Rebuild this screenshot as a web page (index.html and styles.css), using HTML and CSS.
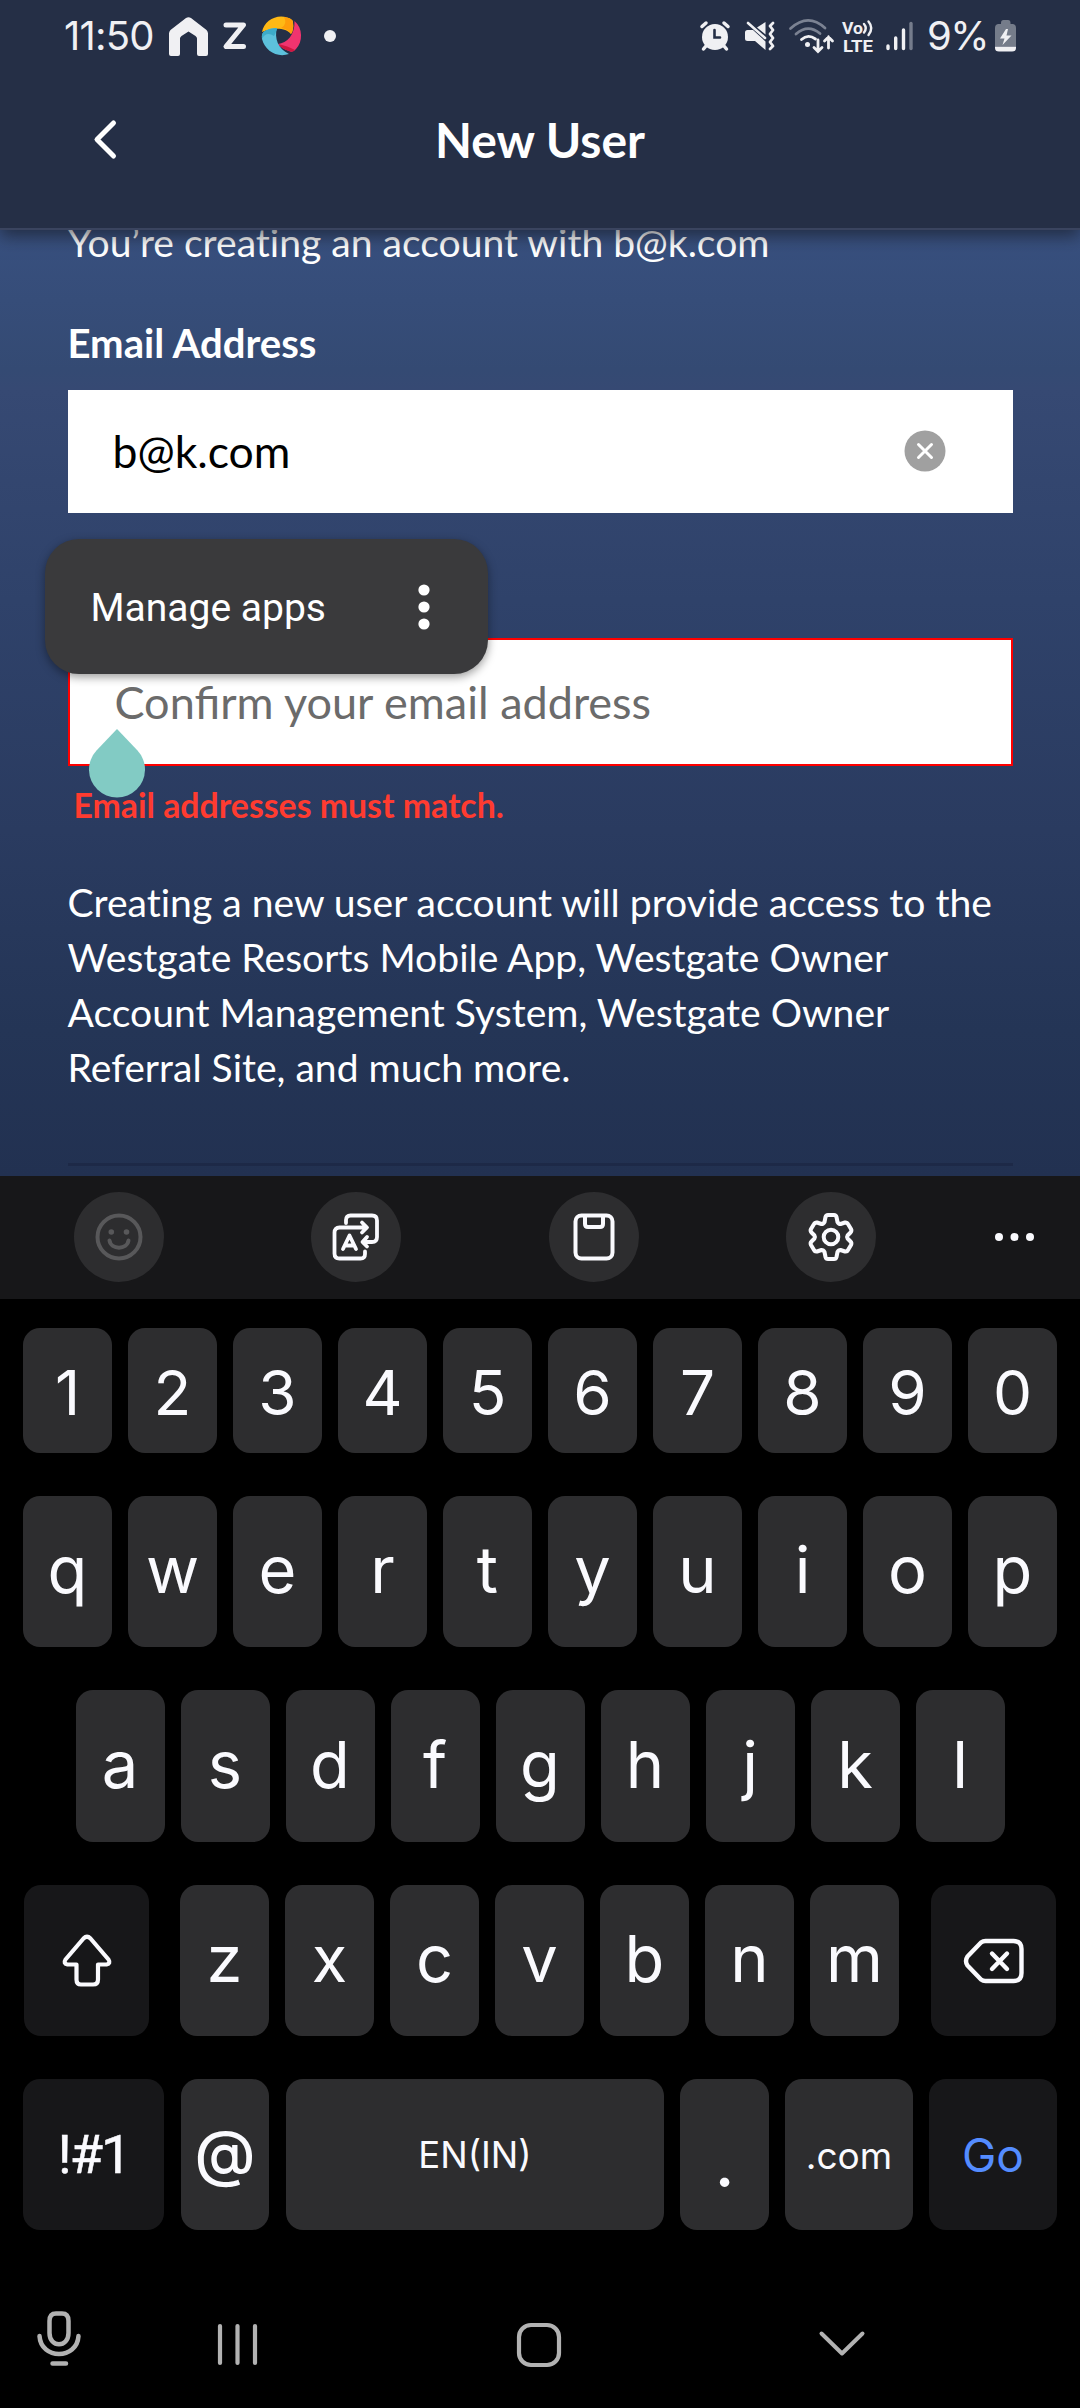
FILE: index.html
```html
<!DOCTYPE html>
<html lang="en">
<head>
<meta charset="utf-8">
<title>New User</title>
<link rel="stylesheet" href="styles.css">
</head>
<body>
<div class="phone">
  <header class="header">
    <div class="status">
      <div class="status-left">
        <span class="clock">11:50</span>
        <svg class="ic-home" width="39" height="39" viewBox="0 0 39 39"><path fill="#f0f0f3" d="M1.500 13 17 1Q19.500-.5 22 1L37.500 13Q39 14.500 39 16.500V37q0 2-2 2H30q-2 0-2-2V21.500Q28 20 26.500 19L19.500 14.500 12.500 19Q11 20 11 21.500V37q0 2-2 2H2q-2 0-2-2V16.500Q0 14.500 1.500 13Z"/></svg>
        <svg class="ic-z" width="24" height="28" viewBox="0 0 24 28"><path d="M3 3H20.500L3 24.500H20.500" fill="none" stroke="#f0f0f3" stroke-width="5" stroke-linecap="round" stroke-linejoin="round"/></svg>
        <svg class="ic-wheel" width="40" height="40" viewBox="0 0 40 40">
          <path fill="#ffb915" d="M0 16C2 5 14-2 25 1.500Q31 3 31 6 32 14 29 18C24 12 12 11 0 16Z"/>
          <path fill="#ff9d0a" d="M22 1Q31 2 31 7 32 14 29 18Q26 13 19 12Q26 8 22 1Z"/>
          <path fill="#f0346f" d="M32.500 5C41 12 41 26 34 33Q31 37 27 35Q20 33 16 28C25 27 33 19 32.500 5Z"/>
          <path fill="#cf1740" d="M16 28Q26 30 33 34Q30 37 27 35Q20 33 16 28Z"/>
          <path fill="#5dc1dc" d="M15 12C12 22 16 33 27 38C15 42 3 35 0 23Q-1 17 3 15Q8 12 15 12Z"/>
          <path fill="#3dabc9" d="M15 12Q14 17 12 20Q4 15 0 23Q-1 17 3 15Q8 12 15 12Z"/>
        </svg>
        <span class="dot"></span>
      </div>
      <div class="status-right">
        <svg width="30" height="30" viewBox="0 0 30 30"><circle cx="15" cy="16" r="13" fill="#f0f0f3"/><path d="M2 5.500 6 2M28 5.500 24 2" stroke="#f0f0f3" stroke-width="3.500" stroke-linecap="round"/><path d="M6 25 3.500 28M24 25 26.500 28" stroke="#f0f0f3" stroke-width="3.500" stroke-linecap="round"/><path d="M14.500 9V16.500H20" fill="none" stroke="#252f46" stroke-width="2.600" stroke-linecap="round"/></svg>
        <svg class="ic-mute" width="30" height="30" viewBox="0 0 30 30"><path fill="#f0f0f3" d="M2.500 9H8L20.500 20.500V29L10 20H2.500Q0 20 0 17.500V11.500Q0 9 2.500 9ZM20.500 1V13.500L12 6.500Z"/><path d="M3 2 20 17" stroke="#f0f0f3" stroke-width="2.600" stroke-linecap="round"/><path d="M28 2 25 5 28 9 25 13 28 17 25 21 28 25 25 28" fill="none" stroke="#f0f0f3" stroke-width="2.800" stroke-linejoin="round" stroke-linecap="round"/></svg>
        <svg class="ic-wifi" width="45" height="34" viewBox="0 0 45 34"><g fill="none" stroke-width="2.800" stroke-linecap="round"><path d="M1.500 9.500Q19-6.500 36 9" stroke="#7b8292"/><path d="M7 15Q19 4.500 31 14.500" stroke="#7b8292"/><path d="M12.500 20.500Q19 14.500 26.500 20" stroke="#f0f0f3"/><path d="M29 21V32M25 28.500 29 32.500 33 28.500M39.500 29V18M35.500 22 39.500 18 43.500 22" stroke="#f0f0f3"/></g><circle cx="18.500" cy="25.500" r="2.500" fill="#f0f0f3"/></svg>
        <svg class="ic-volte" width="32" height="34" viewBox="0 0 32 34"><text x="0" y="14.500" class="volte" textLength="21" lengthAdjust="spacingAndGlyphs">Vo</text><text x="1" y="32.500" class="volte" textLength="30" lengthAdjust="spacingAndGlyphs">LTE</text><path d="M22 5Q25.500 9 22 13.500M26.500 2.500Q32 9 26.500 16" fill="none" stroke="#f0f0f3" stroke-width="2.400" stroke-linecap="round"/></svg>
        <svg class="ic-signal" width="28" height="30" viewBox="0 0 28 30"><g stroke-width="3.400" stroke-linecap="round"><path d="M2 25V27.500M9.700 17V27.500M17.500 9V27.500" stroke="#f0f0f3"/><path d="M25 2.500V27.500" stroke="#757c8c"/></g></svg>
        <span class="battery-text">9%</span>
        <svg class="ic-battery" width="21" height="32" viewBox="0 0 21 32"><path fill="#757c8a" d="M6 3Q6 0 8.500 0H13Q15.500 0 15.500 3V4H18Q21 4.500 21 8V26H0V8Q0 4.500 3 4H6Z"/><path fill="#f0f0f3" d="M0 26.500H21V28Q21 31.500 17 31.500H4Q0 31.500 0 28Z"/><path fill="#f0f0f3" d="M11 9 5 18.500H9.500L7.500 25 16.500 15.500H11.500L13 9Z"/></svg>
      </div>
    </div>
    <div class="titlebar">
      <svg class="back" width="24" height="40" viewBox="0 0 24 40"><path d="M19.500 3 3 19.500 19.500 36" fill="none" stroke="#fff" stroke-width="5" stroke-linecap="round" stroke-linejoin="round"/></svg>
      <h1 class="title">New User</h1>
    </div>
  </header>

  <main class="form">
    <p class="intro">You’re creating an account with b@k.com</p>
    <div class="label">Email Address</div>
    <div class="input">
      <span>b@k.com</span>
      <svg width="42" height="42" viewBox="0 0 42 42"><circle cx="21" cy="21" r="20.500" fill="#a0a0a0"/><path d="M14.500 14.500 27.500 27.500M27.500 14.500 14.500 27.500" stroke="#fff" stroke-width="3" stroke-linecap="round"/></svg>
    </div>
    <div class="input input-error">
      <span>Confirm your email address</span>
      <svg class="handle" width="56" height="68" viewBox="0 0 56 68"><path fill="#82cbc4" d="M28 0 48.500 21.500A28 28 0 1 1 7.500 21.500Z"/></svg>
      <div class="popup">
        <span>Manage apps</span>
        <svg width="12" height="46" viewBox="0 0 12 46"><g fill="#fff"><circle cx="6" cy="6" r="5.600"/><circle cx="6" cy="23" r="5.600"/><circle cx="6" cy="40" r="5.600"/></g></svg>
      </div>
    </div>
    <div class="error">Email addresses must match.</div>
    <p class="info">Creating a new user account will provide access to the<br>Westgate Resorts Mobile App, Westgate Owner<br>Account Management System, Westgate Owner<br>Referral Site, and much more.</p>
    <hr class="rule">
  </main>

  <section class="keyboard">
    <div class="toolbar">
      <div class="tool"><svg width="50" height="50" viewBox="0 0 50 50"><g fill="none" stroke="#58585a" stroke-width="4"><circle cx="25" cy="25" r="21.500"/><path d="M15.500 28.500C17 38 33 38 34.500 28.500" stroke-linecap="round"/></g><g fill="#58585a"><circle cx="17.300" cy="20" r="2.800"/><circle cx="32.500" cy="20" r="2.800"/></g></svg></div>
      <div class="tool"><svg width="50" height="50" viewBox="0 0 50 50"><g fill="none" stroke="#fafafe" stroke-width="3.800" stroke-linecap="round" stroke-linejoin="round"><path d="M15 11V8Q15 3.500 19.500 3.500H41Q46 3.500 46 8.500V25Q46 30 41 30H32M36 25 31.500 30 36 34.500"/><path d="M35 15.500H8.500Q3.500 15.500 3.500 20.500V41.500Q3.500 46.500 8.500 46.500H29.500Q34 46.500 34 42V39.500M31 10.500 36 15.500 31 20.500"/><path d="M12 37 18.500 23.500 25 37M14.500 33.500H22.500"/></g></svg></div>
      <div class="tool"><svg width="50" height="50" viewBox="0 0 50 50"><g fill="none" stroke="#fafafe" stroke-width="4"><rect x="6.500" y="3.500" width="37" height="43" rx="6"/><path d="M16 4V12Q16 15 19 15H31Q34 15 34 12V4"/></g></svg></div>
      <div class="tool"><svg width="50" height="50" viewBox="0 0 50 50"><g fill="none" stroke="#fafafe" stroke-width="4" stroke-linejoin="round"><path d="M19.500 5Q20 3 22 3H28Q30 3 30.500 5L31.500 10Q32.500 12 34.500 12L39 10.500Q41 10 42 12L45 17Q46 19 44.500 20.500L41.500 23.500Q40.500 25 41.500 26.500L44.500 29.500Q46 31 45 33L42 38Q41 40 39 39.500L34.500 38Q32.500 38 31.500 40L30.500 45Q30 47 28 47H22Q20 47 19.500 45L18.500 40Q17.500 38 15.500 38L11 39.500Q9 40 8 38L5 33Q4 31 5.500 29.500L8.500 26.500Q9.500 25 8.500 23.500L5.500 20.500Q4 19 5 17L8 12Q9 10 11 10.500L15.500 12Q17.500 12 18.500 10Z"/><circle cx="25" cy="25" r="7.300"/></g></svg></div>
      <svg class="more" width="40" height="8" viewBox="0 0 40 8"><g fill="#fafafe"><circle cx="4" cy="4" r="4"/><circle cx="19.500" cy="4" r="4"/><circle cx="35" cy="4" r="4"/></g></svg>
    </div>
    <div class="row row-num"><b>1</b><b>2</b><b>3</b><b>4</b><b>5</b><b>6</b><b>7</b><b>8</b><b>9</b><b>0</b></div>
    <div class="row"><b>q</b><b>w</b><b>e</b><b>r</b><b>t</b><b>y</b><b>u</b><b>i</b><b>o</b><b>p</b></div>
    <div class="row row-home"><b>a</b><b>s</b><b>d</b><b>f</b><b>g</b><b>h</b><b>j</b><b>k</b><b>l</b></div>
    <div class="row">
      <b class="dark shift"><svg width="52" height="54" viewBox="0 0 52 54"><path d="M22.500 4.500Q26 1 29.500 4.500L47.500 25.500Q50 29.500 45.500 30.500H37V45.500Q37 50.500 32 50.500H20Q15.500 50.500 15.500 45.500V30.500H6.500Q2 29.500 4.500 25.500Z" fill="none" stroke="#fafafe" stroke-width="4.200" stroke-linejoin="round"/></svg></b>
      <b>z</b><b>x</b><b>c</b><b>v</b><b>b</b><b>n</b><b>m</b>
      <b class="dark back-key"><svg width="62" height="46" viewBox="0 0 62 46"><g fill="none" stroke="#fafafe" stroke-width="4.400" stroke-linecap="round" stroke-linejoin="round"><path d="M18 4.500Q20 3 22.500 3H50.500Q58.500 3 58.500 11V35Q58.500 43 50.500 43H22.500Q20 43 18 41.500L4.500 27.500Q1.500 23 4.500 18.500Z"/><path d="M29 15.500 44 31M44 15.500 29 31"/></g></svg></b>
    </div>
    <div class="row row-last">
      <b class="dark k-sym">!#1</b><b class="k-at">@</b><b class="k-space">EN(IN)</b><b class="k-dot">.</b><b class="k-com">.com</b><b class="dark k-go">Go</b>
    </div>
  </section>

  <nav class="nav">
    <svg class="n-mic" width="44" height="56" viewBox="0 0 44 56"><g fill="none" stroke="#b2b2b2" stroke-width="4.500" stroke-linecap="round"><path d="M12.500 10Q12.500 2.500 19 2.500H25Q31.500 2.500 31.500 10V22C31.500 37 12.500 37 12.500 22Z"/><path d="M2.500 25C4 49 40 49 41.500 25M15.500 52.500H29"/></g></svg>
    <svg class="n-recent" width="42" height="44" viewBox="0 0 42 44"><path d="M3 3V40M20.500 3V40M38 3V40" stroke="#b2b2b2" stroke-width="4.200" stroke-linecap="round"/></svg>
    <svg class="n-home" width="46" height="46" viewBox="0 0 46 46"><rect x="3" y="3" width="40" height="40" rx="12" fill="none" stroke="#b2b2b2" stroke-width="4.200"/></svg>
    <svg class="n-down" width="46" height="26" viewBox="0 0 46 26"><path d="M2.500 2.500 23 22.500 43.500 2.500" fill="none" stroke="#b2b2b2" stroke-width="4" stroke-linecap="round" stroke-linejoin="round"/></svg>
  </nav>
</div>
</body>
</html>
```
FILE: styles.css
```css
* { box-sizing: border-box; margin: 0; padding: 0; }
body { background: #000; }
svg { display: block; flex: none; overflow: visible; }
.phone { width: 1080px; height: 2408px; display: flex; flex-direction: column; overflow: hidden; background: #000; font-family: Lato, sans-serif; }

/* Header */
.header { position: relative; z-index: 1; flex: none; height: 230px; background: #252f46; border-bottom: 2px solid #3a445f; box-shadow: 0 6px 16px rgba(20, 22, 28, .6); }
.status { height: 72px; display: flex; justify-content: space-between; padding: 0 64px 0 64px; }
.status-left, .status-right { display: flex; align-items: center; height: 72px; }
.clock, .battery-text { font: 400 40px/72px Inter, sans-serif; color: #f0f0f3; }
.clock { width: 105px; letter-spacing: -.8px; }
.ic-z { margin-left: 15px; }
.ic-wheel { margin-left: 15px; }
.dot { width: 12px; height: 12px; border-radius: 50%; background: #f0f0f3; margin-left: 22px; }
.ic-mute { margin-left: 15px; }
.ic-wifi { margin-left: 14px; }
.ic-volte { margin-left: 8px; }
.volte { font: 700 17px Roboto, sans-serif; fill: #f0f0f3; }
.ic-signal { margin-left: 12px; }
.battery-text { width: 68px; margin-left: 13px; letter-spacing: -1.5px; }
.titlebar { height: 136px; display: grid; grid-template-columns: 118px 844px 118px; align-items: center; }
.back { justify-self: end; }
.title { text-align: center; font-weight: 700; font-size: 48px; line-height: 60px; color: #fff; }

/* Form */
.form { flex: none; height: 946px; padding: 0 67.5px; overflow: hidden; color: #fff; background: linear-gradient(#38507f 0, #344a73 140px, #364973 160px, #2f426a 370px, #2a3b60 600px, #243556 800px, #223151 946px); }
.intro { margin-top: -16px; font-size: 39.1px; line-height: 55px; font-variant-ligatures: none; }
.label { margin-top: 49px; font-weight: 700; font-size: 40.1px; line-height: 50px; }
.input { position: relative; margin-top: 22px; height: 123px; padding: 0 67px 2px 45px; display: flex; align-items: center; justify-content: space-between; background: #fff; color: #000; font-size: 44.5px; line-height: 54px; }
.input-error { margin-top: 125px; height: 128px; border: 2px solid #f00; padding-bottom: 0; color: #6b6b6b; font-size: 45px; }
.handle { position: absolute; left: 19px; top: 89px; }
.popup { position: absolute; left: -25px; top: -101px; width: 443px; height: 135px; padding: 0 58px 0 46px; display: flex; align-items: center; justify-content: space-between; border-radius: 34px; background: #3a3a3c; box-shadow: 0 3px 10px rgba(0, 0, 0, .4); color: #fff; font: 400 39px/46px Roboto, sans-serif; }
.popup span { padding-top: 3px; }
.error { margin: 19px 0 0 6px; font-weight: 700; font-size: 33.8px; line-height: 40px; color: #ff3b30; }
.info { margin-top: 49px; font-size: 39.1px; line-height: 55px; white-space: nowrap; font-variant-ligatures: none; }
.rule { border: 0; height: 3px; margin-top: 69px; background: #1d2947; }

/* Keyboard */
.keyboard { flex: none; height: 1054px; display: flex; flex-direction: column; }
.toolbar { flex: none; height: 123px; background: #171719; display: flex; gap: 147.300px; padding: 16px 0 0 74px; }
.tool { flex: none; width: 90px; height: 90px; border-radius: 50%; background: #2d2d2f; display: flex; align-items: center; justify-content: center; }
.more { margin: 41px 0 0 -28px; }
.row { flex: none; height: 151px; margin-top: 43px; display: flex; justify-content: center; gap: 16px; font: 400 65px/80px Inter, sans-serif; color: #fafafe; }
.row b { flex: none; width: 89px; border-radius: 17px; background: #2d2d2f; font-weight: 400; display: flex; align-items: center; justify-content: center; padding-bottom: 3px; }
.row b.dark { background: #171719; }
.row-home { height: 152px; }
.row-num { height: 125px; margin-top: 29px; font-size: 62px; }
.row-num b { padding: 4px 0 0; }
.row b.shift { width: 125px; margin-right: 15px; padding: 0; }
.row b.back-key { width: 125px; margin-left: 16px; padding: 0; }
.row b.k-sym { width: 141px; font: 400 54px/80px Roboto, sans-serif; letter-spacing: -2px; padding: 0; -webkit-text-stroke: .5px #fafafe; }
.row b.k-at { font-size: 62px; font-weight: 500; width: 88px; margin-left: 1px; }
.row b.k-space { width: 378px; font-size: 36.500px; padding: 0; margin-left: 1px; }
.row b.k-dot { padding: 18px 0 0; font-weight: 500; }
.row b.k-com { width: 128px; font-size: 37px; padding: 2px 0 0; }
.row b.k-go { width: 128px; font-size: 46px; padding: 1px 0 0; color: #548cff; }

/* Navigation bar */
.nav { flex: 1; display: flex; align-items: flex-start; padding: 81px 0 0 37px; }
.n-recent { margin: 12px 0 0 136px; }
.n-home { margin: 11px 0 0 257px; }
.n-down { margin: 20px 0 0 257px; }
```
